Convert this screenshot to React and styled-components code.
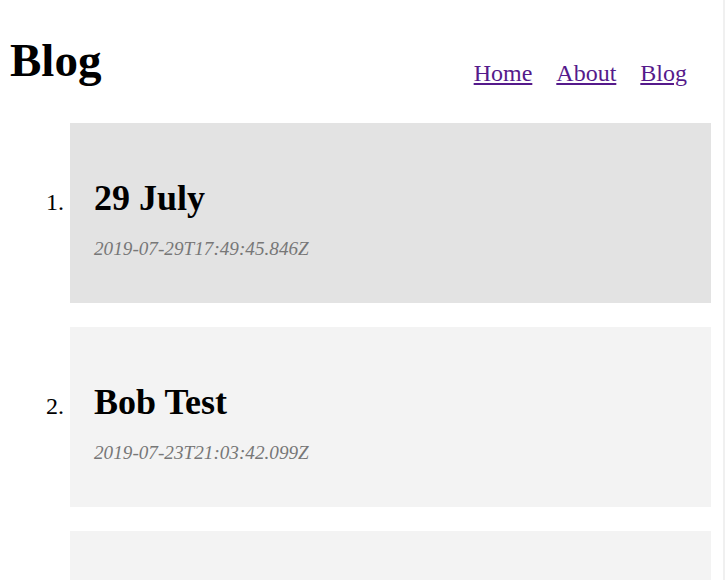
import React from 'react';
import styled, { createGlobalStyle } from 'styled-components';

const GlobalStyle = createGlobalStyle`
  html {
    overflow: hidden;
  }
  body {
    margin: 0;
    font-family: "Liberation Serif", "Times New Roman", serif;
    background: #ffffff;
    color: #000000;
  }
`;

const Page = styled.div`
  min-height: 100vh;
  padding: 0 12px 0 10px;
  border-right: 2px solid #f0f0f0;
`;

const Header = styled.header`
  display: flex;
  flex-direction: row;
  justify-content: space-between;
  align-items: flex-end;
  padding: 33px 24px 0 0;
`;

const SiteTitle = styled.h1`
  margin: 0;
  font-size: 47px;
  font-weight: 700;
  line-height: normal;
`;

const Nav = styled.nav`
  display: flex;
  flex-direction: row;
  gap: 24px;
`;

const NavLink = styled.a`
  font-size: 24px;
  line-height: normal;
  color: #551a8b;
  text-decoration: underline;
`;

const PostList = styled.ol`
  margin: 36px 0 0 0;
  padding: 0 0 0 60px;
`;

const PostItem = styled.li`
  font-size: 24px;
  padding: 54px 24px 43px;
  margin-bottom: 24px;
  background-color: ${(p) => (p.$active ? '#e3e3e3' : '#f3f3f3')};
`;

const PostTitle = styled.h2`
  margin: 0 0 19px;
  font-size: 36px;
  font-weight: 700;
  line-height: normal;
`;

const PostDate = styled.p`
  margin: 0;
  font-size: 19.2px;
  font-style: italic;
  line-height: normal;
  color: #777777;
`;

const posts = [
  { title: '29 July', date: '2019-07-29T17:49:45.846Z' },
  { title: 'Bob Test', date: '2019-07-23T21:03:42.099Z' },
  { title: 'Hello', date: '2019-07-20T10:12:05.512Z' },
];

const App = () => {
  return (
    <>
      <GlobalStyle />
      <Page>
        <Header>
          <SiteTitle>Blog</SiteTitle>
          <Nav>
            <NavLink href="#">Home</NavLink>
            <NavLink href="#">About</NavLink>
            <NavLink href="#">Blog</NavLink>
          </Nav>
        </Header>
        <PostList>
          {posts.map((post, i) => (
            <PostItem key={post.date} $active={i === 0}>
              <PostTitle>{post.title}</PostTitle>
              <PostDate>{post.date}</PostDate>
            </PostItem>
          ))}
        </PostList>
      </Page>
    </>
  );
};

export default App;
